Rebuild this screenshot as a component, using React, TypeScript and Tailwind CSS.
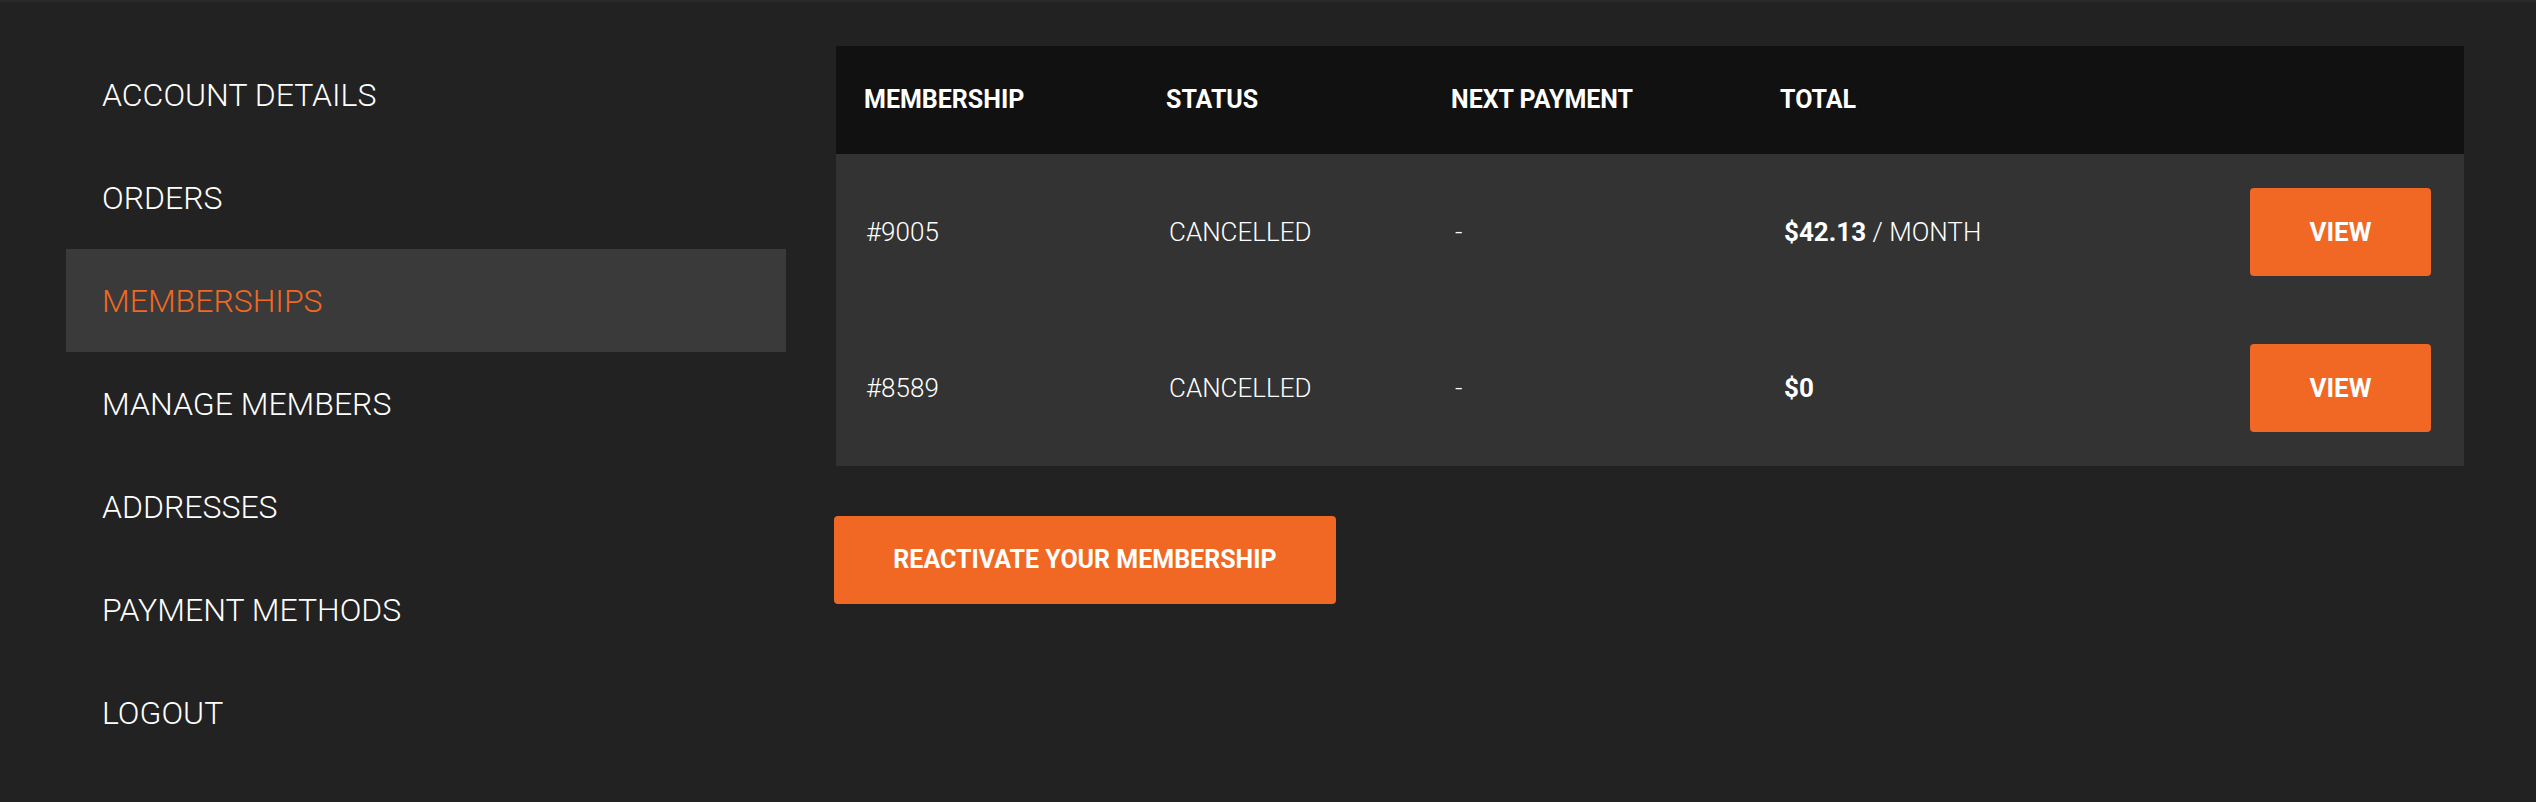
import React from "react";

const navItems = [
  "ACCOUNT DETAILS",
  "ORDERS",
  "MEMBERSHIPS",
  "MANAGE MEMBERS",
  "ADDRESSES",
  "PAYMENT METHODS",
  "LOGOUT",
];

const memberships = [
  { id: "#9005", status: "CANCELLED", next: "-", total: "$42.13", period: "MONTH" },
  { id: "#8589", status: "CANCELLED", next: "-", total: "$0", period: "" },
];

const cols = "grid grid-cols-[302px_285px_329px_1fr_auto] items-center";

export default function App() {
  return (
    <div
      className="min-h-screen bg-[#222222] border-t-2 border-[#2a2a2a] text-white"
      style={{ fontFamily: "Roboto, 'Liberation Sans', sans-serif" }}
    >
      <div className="flex gap-[50px] pl-[66px] pr-[72px] pt-[41px]">
        <nav className="w-[720px] shrink-0 flex flex-col">
          {navItems.map((item) => {
            const active = item === "MEMBERSHIPS";
            return (
              <a
                key={item}
                href="#"
                className={`h-[103px] flex items-center pl-[36px] text-[32px] font-light ${
                  active ? "bg-[#3a3a3a] text-[#f06823]" : "text-white"
                }`}
              >
                {item}
              </a>
            );
          })}
        </nav>

        <main className="flex-1 flex flex-col mt-[3px]">
          <div className="bg-[#333333]">
            <div className={`${cols} h-[108px] bg-[#111111] text-[25px] font-bold`}>
              <div className="pl-[28px]">MEMBERSHIP</div>
              <div className="pl-[28px]">STATUS</div>
              <div className="pl-[28px]">NEXT PAYMENT</div>
              <div className="pl-[28px]">TOTAL</div>
              <div className="w-[214px]" />
            </div>
            {memberships.map((m) => (
              <div key={m.id} className={`${cols} h-[156px] text-[26px] font-light`}>
                <div className="pl-[30px]">{m.id}</div>
                <div className="pl-[31px]">{m.status}</div>
                <div className="pl-[32px]">{m.next}</div>
                <div className="pl-[32px]">
                  <span className="font-bold">{m.total}</span>
                  {m.period && <span> / {m.period}</span>}
                </div>
                <div className="pr-[33px]">
                  <button className="w-[181px] h-[88px] rounded bg-[#f06823] text-white text-[26px] font-bold">
                    VIEW
                  </button>
                </div>
              </div>
            ))}
          </div>

          <div className="mt-[50px]">
            <button className="ml-[-2px] w-[502px] h-[88px] rounded bg-[#f06823] text-white text-[25px] font-bold">
              REACTIVATE YOUR MEMBERSHIP
            </button>
          </div>
        </main>
      </div>
    </div>
  );
}
